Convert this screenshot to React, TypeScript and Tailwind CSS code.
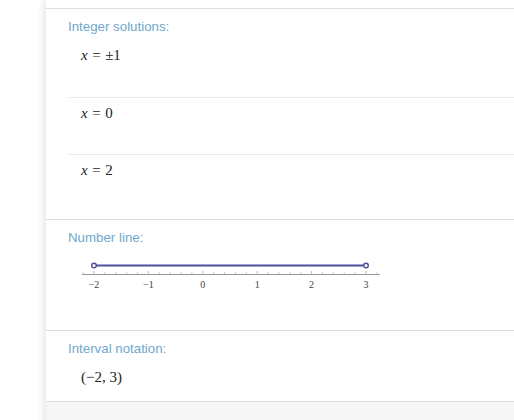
import React from 'react';

const serif = "font-['Liberation_Serif',serif]";
const label = "font-['Liberation_Sans',sans-serif] text-[13.3px] leading-[16px] text-[#6fa8cc]";

const Eq = ({ value }: { value: string }) => (
  <span className={`${serif} text-[15px] leading-[20px] text-[#222]`}>
    <span className="italic">x</span>
    <span className="mx-[4.5px]">=</span>
    {value}
  </span>
);

const NumberLine = () => {
  const unit = 54.4;
  const x0 = 26;
  const labels = ['−2', '−1', '0', '1', '2', '3'];
  const ticks: number[] = [];
  for (let i = -1; i <= 26; i++) ticks.push(i);

  return (
    <svg width="330" height="64" className="block">
      <line x1="14" y1="28.5" x2="312" y2="28.5" stroke="#9a9a9a" strokeWidth="1" />
      {ticks.map((t) => {
        const x = x0 + (t * unit) / 5;
        const major = t % 5 === 0;
        return (
          <line
            key={t}
            x1={x}
            x2={x}
            y1={major ? 25 : 26.5}
            y2="28.5"
            stroke="#a8a8a8"
            strokeWidth="0.8"
          />
        );
      })}
      {labels.map((l, i) => (
        <text
          key={l}
          x={x0 + i * unit}
          y="41.5"
          textAnchor="middle"
          fontSize="10"
          fontFamily="Liberation Serif, serif"
          fill="#444"
        >
          {l}
        </text>
      ))}
      <line x1={x0} y1="19.5" x2={x0 + 5 * unit} y2="19.5" stroke="#4f4f9c" strokeWidth="2" />
      <circle cx={x0} cy="19.5" r="2.3" fill="#fff" stroke="#4f4f9c" strokeWidth="1.4" />
      <circle cx={x0 + 5 * unit} cy="19.5" r="2.3" fill="#fff" stroke="#4f4f9c" strokeWidth="1.4" />
    </svg>
  );
};

const App = () => {
  const solutions = ['±1', '0', '2'];

  return (
    <div className="flex min-h-[420px] bg-white">
      <div className="w-[46px] shrink-0 bg-white" />
      <main className="flex-1 bg-white shadow-[-3px_0_6px_rgba(0,0,0,0.09)]">
        <div className="h-[8px]" />

        <section className="border-t border-[#dddddd] pl-[22px] pt-[10px] pb-[8px]">
          <p className={label}>Integer solutions:</p>
          <div className="mt-[5px]">
            {solutions.map((s, i) => (
              <div
                key={s}
                className={`h-[57px] pl-[13px] pt-[2px] ${i > 0 ? 'border-t border-[#e3edf1]' : ''}`}
              >
                <Eq value={s} />
              </div>
            ))}
          </div>
        </section>

        <section className="border-t border-[#dddddd] pl-[22px] pt-[10px] pb-[20px]">
          <p className={label}>Number line:</p>
          <NumberLine />
        </section>

        <section className="border-t border-[#dddddd] pl-[22px] pt-[10px] pb-[14px]">
          <p className={label}>Interval notation:</p>
          <div className={`mt-[10px] pl-[13px] ${serif} text-[15px] leading-[20px] text-[#222]`}>
            (−2, 3)
          </div>
        </section>

        <section className="h-[40px] border-t border-[#dddddd] bg-[#f6f6f6]" />
      </main>
    </div>
  );
};

export default App;
